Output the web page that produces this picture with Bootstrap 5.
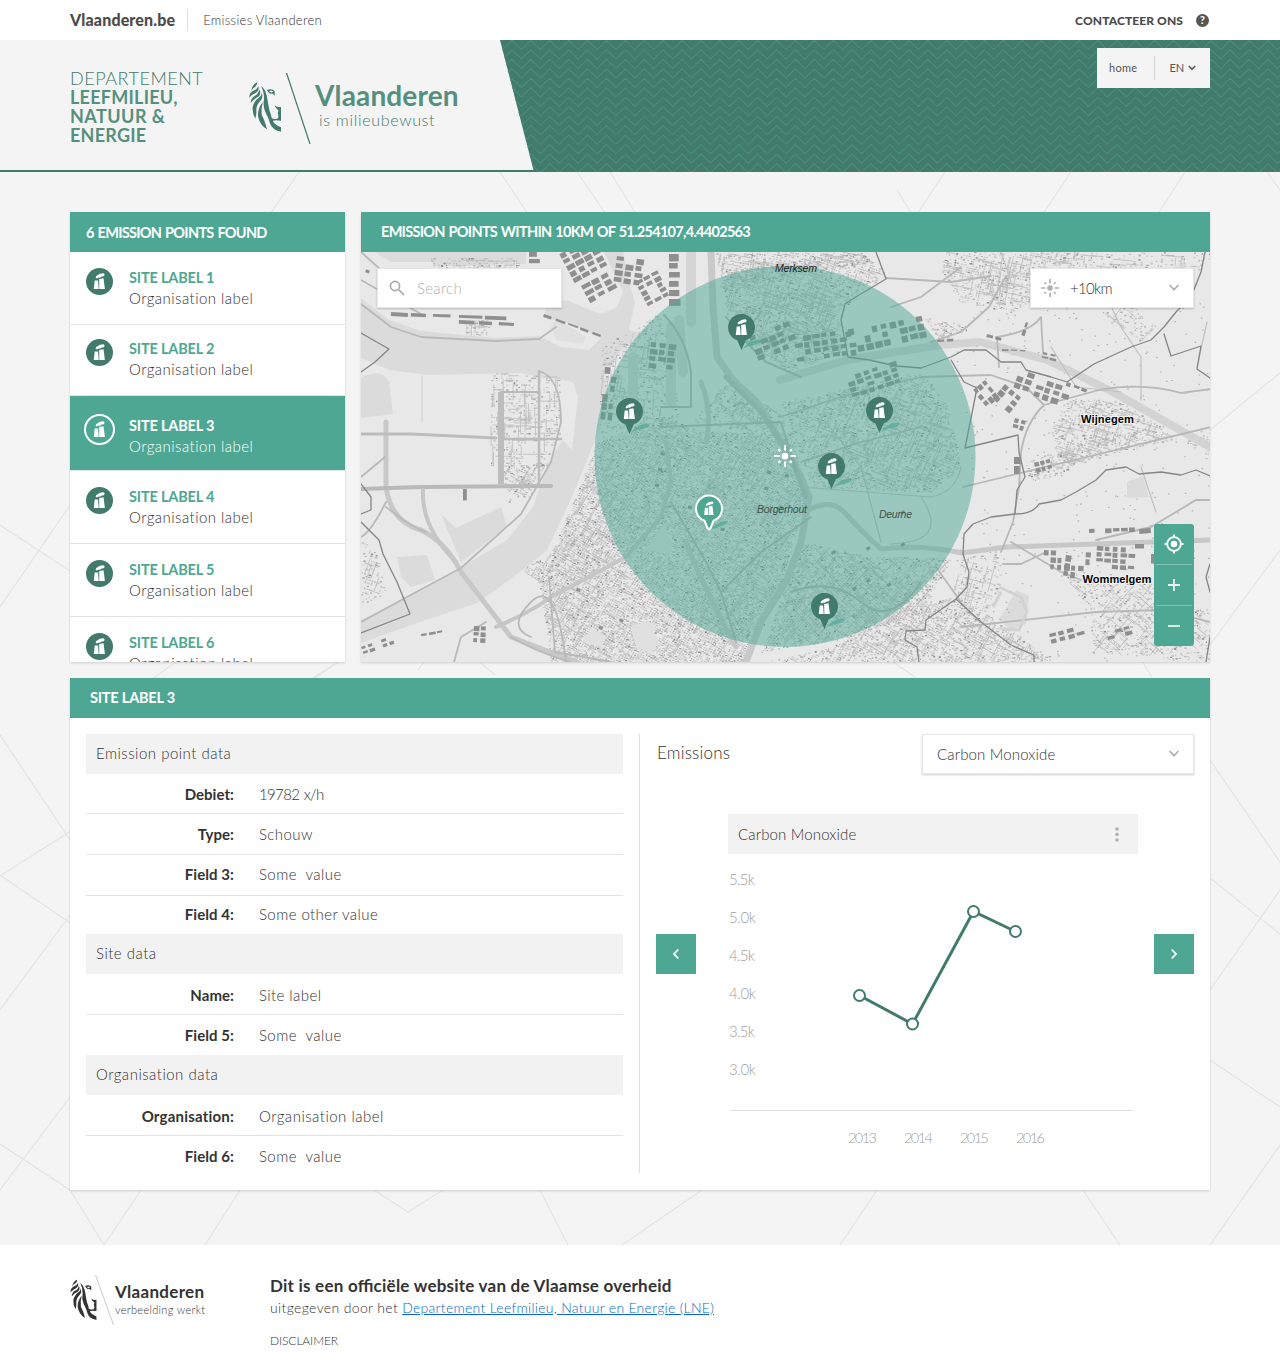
<!DOCTYPE html>
<html lang="nl">
<head>
<meta charset="utf-8">
<meta name="viewport" content="width=device-width, initial-scale=1">
<title>Emissies Vlaanderen</title>
<link href="https://cdn.jsdelivr.net/npm/bootstrap@5.3.0/dist/css/bootstrap.min.css" rel="stylesheet">
<style>
:root{--teal:#4ea793;--pine:#427a6b;--ink:#333;--line:#e3e3e3}
body{font-family:Lato,"Open Sans",sans-serif;font-weight:300;font-size:15px;line-height:21px;letter-spacing:.42px;color:var(--ink);background:#f4f4f4;height:1365px;overflow:hidden}
b,.fw-bold{font-weight:700!important}
svg{display:block;letter-spacing:0}
.topbar{height:40px;background:#fff}
.brand-name{font-size:16px;font-weight:900;letter-spacing:.13px;padding-right:12px;height:22px;line-height:22px;border-right:1px solid #dedede;color:#4b4b4b}
.app-name{font-size:13px;padding-left:15px;letter-spacing:.3px}
.contact{font-size:12px;font-weight:900;letter-spacing:.1px;color:#4b4b4b}
.hero{height:132px;border-bottom:2px solid var(--pine);position:relative}
.hero-bg{position:absolute;inset:0;height:132px;width:100%}
.hero .container{position:relative}
.dept{color:#55907f;font-size:18px;line-height:19px;letter-spacing:.25px;padding-top:29px;width:179px}
.dept div:first-child{letter-spacing:.53px;color:var(--pine)}
.dept .wide{letter-spacing:.45px}
.logo-name{font-size:28px;line-height:32px;color:#55907f;letter-spacing:.15px}
.logo-sub{font-size:16px;line-height:20px;color:var(--pine);letter-spacing:.7px;margin-top:-1px}
.langnav{background:#f4f4f4;width:113px;height:40px;margin-top:8px;font-size:11px;font-weight:400;letter-spacing:.3px;color:#555}
.langnav .rule{width:1px;height:24px;background:#d2d2d2}
.langnav span{margin-top:-1px}
.backdrop{position:absolute;left:0;top:172px;width:1280px;height:1073px}
.page{padding-top:40px;height:1073px;position:relative}
.panel{background:#fff;box-shadow:0 1px 2px rgba(0,0,0,.16)}
.panel-head{background:var(--teal);color:#fff;font-weight:700;height:40px;line-height:39px;font-size:14.5px;letter-spacing:-.71px;word-spacing:1px}
.sites{width:275px;height:450px;overflow:hidden}
.site{height:73px;padding:16px 16px 0;border-bottom:1px solid var(--line);gap:16px}
.site .nm{color:var(--teal);font-weight:700;font-size:14.5px;letter-spacing:-.17px}
.site .org{letter-spacing:.47px}
.site>div{margin-top:-1px}
.site.s2{height:71px;padding-top:14px}
.site.on{background:var(--teal);height:75px;color:#fff;padding:18px 14px 0;gap:14px;border-color:#dcebe7}
.site.on>div{margin-top:1px}
.site.on .nm{color:#fff}
.mapbox{width:849px;height:450px}
.mapview{height:410px;position:relative;overflow:hidden}
.field{background:#fff;border:1px solid #e6e6e6;box-shadow:0 1px 2px rgba(0,0,0,.2);height:40px}
.over{position:absolute;top:16px}
.zoomer{position:absolute;right:16px;bottom:16px;width:40px;background:var(--teal);border-radius:3px;padding:0 2px}
.zoomer span{height:40px;display:flex;align-items:center;justify-content:center}
.zoomer span+span{border-top:1px solid #83c1b4;height:41px}
.detail{margin-top:16px;height:512px}
.facts{width:554px;border-right:1px solid #dedede;height:439px;padding-right:16px}
.sect{background:#f2f2f2;height:40px;line-height:38px;padding-left:10px;letter-spacing:.5px}
.fact{height:41px;line-height:41px;border-bottom:1px solid var(--line)}
.fact.mid{line-height:39px}
.fact.low{line-height:43px}
.fact.top{height:40px}
.fact.end{height:38px;border:0;line-height:37px}
.fact.end2{height:40px;border:0}
.fact b{width:148px;text-align:right;margin-right:25px;letter-spacing:.05px}
.arrow{width:40px;height:40px;background:var(--teal);margin-top:120px}
.foot{background:#fff;height:120px}
.foot a{color:#0b68c8}
text{font-family:Lato,sans-serif}
.town{font-family:"Liberation Sans",Arial,sans-serif;font-size:10.5px;font-style:italic;fill:#3c524c}
.city{font-family:"Liberation Sans",Arial,sans-serif;font-size:11.2px;font-weight:bold;fill:#000;stroke:#f2f2f2;stroke-width:2px;paint-order:stroke}
</style>
<script src="https://cdn.jsdelivr.net/npm/bootstrap@5.3.0/dist/js/bootstrap.bundle.min.js"></script>
</head>
<body>
<!-- shared symbols -->
<svg width="0" height="0" class="position-absolute">
  <defs>
    <g id="lion">
      <path d="M34 68Q36 51 52 42Q51 52 46 56Q38 60 34 68z"/>
      <path d="M28 89Q27 76 38 69Q52 64 55 55Q59 66 48 74Q35 79 28 89z"/>
      <path d="M32 105Q32 91 44 84Q57 77 58 64Q65 77 55 86Q40 93 32 105z"/>
      <path d="M46 152Q37 138 38 118Q42 98 60 86Q65 82 65 74Q71 90 60 100Q48 112 49 128Q50 138 46 152z"/>
      <path d="M81 184Q58 170 54 143Q53 120 69 101Q62 124 66 143Q74 156 81 184z"/>
      <path d="M63 54Q76 64 80 82L88 126Q93 138 95 150Q98 154 112 152L123 148V158Q106 156 99 158Q100 168 123 178V191Q96 186 90 166Q86 150 76 132Q68 112 72 94Q73 72 63 54z"/>
      <path d="M103 112Q110 119 123 117V150L112 152Q117 148 115 142Q111 134 116 128Q108 122 103 112z"/>
      <path d="M81 66Q96 60 104 69L104 83Q99 75 90 77Q84 74 81 66z"/>
      <path d="M87 70Q94 65 100 71Q95 76 87 70z" fill="#f4f4f4"/>
    </g>
    <g id="plant" fill="#fff">
      <path d="M-4.8-.9H-1.4L-.8 7.6H-5.7z"/>
      <path d="M-.3-2.4L4-3.2L5.4 7.6H-.2z"/>
      <path d="M-3.9-3.5Q-4-5.8-1.4-6.5Q-.8-8 2-8Q5.2-9 5.1-6.6Q4.6-4.8 2.2-4.9Q.8-3.4-1-4Q-2.8-2.6-3.9-3.5z"/>
    </g>
    <g id="pin">
      <path d="M1 22Q4 17 11 13.5Q19 11 20.5 13Q19 16 12 17.5Q5 18.5 1 22z" fill="#56aa98" opacity=".75"/>
      <path d="M0 22.500L-4.300 12.800A13.500 13.500 0 1 1 4.300 12.800z" fill="#427a6b"/>
      <use href="#plant"/>
    </g>
    <g id="sun" stroke="currentColor" stroke-width="1.700" fill="none">
      <circle r="2.800" fill="currentColor" stroke="none"/>
      <path d="M0-9V-4.500M0 9V4.500M-9 0H-4.500M9 0H4.500M-5.600-5.600L-4-4M5.600 5.600L4 4M-5.600 5.600L-4 4M5.600-5.600L4-4"/>
    </g>
    <symbol id="dot" viewBox="-13.500 -13.500 27 27"><circle r="13.500" fill="#427a6b"/><use href="#plant"/></symbol>
  </defs>
</svg>

<div class="topbar">
  <div class="container px-0 d-flex align-items-center h-100">
    <span class="brand-name">Vlaanderen.be</span>
    <span class="app-name">Emissies Vlaanderen</span>
    <span class="contact ms-auto">CONTACTEER ONS</span>
    <svg style="margin:0 1px 0 13px" width="13" height="13" viewBox="0 0 13 13"><circle cx="6.500" cy="6.500" r="6.500" fill="#555"/><text x="6.500" y="10.200" font-size="10.500" font-weight="900" fill="#fff" text-anchor="middle">?</text></svg>
  </div>
</div>

<header class="hero">
  <svg class="hero-bg" viewBox="0 0 1280 132">
    <clipPath id="slant"><path d="M500 0H1280V132H534z"/></clipPath>
    <path d="M500 0H1280V132H534z" fill="#427a6b"/>
    <g clip-path="url(#slant)"><path id="zigzag" fill="none" stroke="#468f7c" stroke-width="1.100"/></g>
  </svg>
  <div class="container px-0 d-flex align-items-start">
    <div class="dept"><div>DEPARTEMENT</div><div class="fw-bold">LEEFMILIEU,<br><span class="wide">NATUUR &amp;</span><br>ENERGIE</div></div>
    <svg width="65" height="76" viewBox="0 0 65 76" style="margin-top:31px"><g transform="translate(-9 -3)"><use href="#lion" transform="scale(.3333)" fill="#427a6b"/></g><path d="M37.500 2L61 73" stroke="#427a6b" stroke-width="1.200"/></svg>
    <div style="margin:39px 0 0 1px"><div class="logo-name fw-bold">Vlaanderen</div><div class="logo-sub ps-1">is milieubewust</div></div>
    <nav class="langnav ms-auto d-flex align-items-center">
      <span style="margin-left:12px">home</span><span class="rule" style="margin-left:17px"></span><span style="margin-left:14px;letter-spacing:0">EN</span>
      <svg width="8" height="6" viewBox="0 0 8 6" style="margin-left:4px"><path d="M.8 1L4 4.300L7.200 1" fill="none" stroke="#555" stroke-width="1.500"/></svg>
    </nav>
  </div>
</header>

<svg class="backdrop" viewBox="0 172 1280 1073" fill="none" stroke="#e3e3e3" stroke-width="1.100">
  <path d="M299 172L0 607M577 172L606 214M500 172L528 214M610 172L636 214M945 172L917 214M897 190L912 214M1071 172L1043 214M1185 172L1158 214M1267 172L1280 190M0 525L70 571M0 876L338 662M120 702L176 662M280 702L338 662M418 670L424 662M480 662L495 675M890 660L915 677M1140 658L1152 677M1280 373L1210 430M1210 645L1280 550M1210 760L1280 862M1210 878L1280 934M1210 1060L1280 1107M1280 1145L1210 1245M70 840L0 735M70 923L0 875M0 1010L70 915M0 1144L70 1190L104 1245M70 1097L0 1190M104 1245L141 1190M374 1190L408 1212L443 1190M205 1245L240 1190M540 1190L568 1245M622 1245L702 1190M840 1245L877 1190M1083 1190L1120 1245M1210 990L1280 890"/>
</svg>

<main class="page">
  <div class="container px-0">
    <div class="d-flex gap-3">
      <section class="panel sites">
        <div class="panel-head ps-3" style="line-height:41px">6 EMISSION POINTS FOUND</div>
        <div class="site d-flex"><svg width="27" height="27"><use href="#dot"/></svg><div><div class="nm">SITE LABEL 1</div><div class="org">Organisation label</div></div></div>
        <div class="site s2 d-flex"><svg width="27" height="27"><use href="#dot"/></svg><div><div class="nm">SITE LABEL 2</div><div class="org">Organisation label</div></div></div>
        <div class="site on d-flex"><svg width="31" height="31" viewBox="-15.500 -15.500 31 31"><circle r="14.500" fill="none" stroke="#fff" stroke-width="2"/><use href="#plant"/></svg><div><div class="nm">SITE LABEL 3</div><div class="org">Organisation label</div></div></div>
        <div class="site d-flex"><svg width="27" height="27"><use href="#dot"/></svg><div><div class="nm">SITE LABEL 4</div><div class="org">Organisation label</div></div></div>
        <div class="site d-flex"><svg width="27" height="27"><use href="#dot"/></svg><div><div class="nm">SITE LABEL 5</div><div class="org">Organisation label</div></div></div>
        <div class="site d-flex"><svg width="27" height="27"><use href="#dot"/></svg><div><div class="nm">SITE LABEL 6</div><div class="org">Organisation label</div></div></div>
      </section>

      <section class="panel mapbox">
        <div class="panel-head" style="padding-left:20px">EMISSION POINTS WITHIN 10KM OF 51.254107,4.4402563</div>
        <div class="mapview">
          <svg width="849" height="410" viewBox="0 0 849 410">
            <rect width="849" height="410" fill="#e8e8e8"/>
            <!-- water -->
            <g fill="#dbdbdb">
              <path d="M0 46L28 68L60 79L135 86L178 84L200 95L228 98L240 86L205 70L183 66L185 56L205 48L240 62L256 55L262 40L243 0H262L268 30L274 50L268 78L284 82L262 96L243 125L247 141L240 175L234 188L211 245L186 298L166 315L116 351L56 371L0 391V368L46 345L99 316L146 288L172 255L187 211L202 188L211 198L217 145L212 130L159 121L66 123L29 118L0 106z"/>
              <path d="M14 0H165V12H140L120 14H75L70 10H30z"/>
              <path d="M0 126Q20 115 28 130L32 162L0 166zM80 262L95 276L140 255L146 275L100 310zM36 305L66 303L74 328L50 335L40 325zM345 231L358 228L360 246L344 246z"/>
              <path d="M190 75L196 66L225 85L222 92L195 88z" fill="#e0e0e0"/>
              <path d="M766 230L782 224L788 245L766 246zM655 338L668 344L665 372L650 378L638 368L645 356z"/>
            </g>
            <g id="texture"></g>
            <!-- canal and docks -->
            <g fill="none" stroke-linejoin="round" stroke-linecap="round">
              <path d="M350 0L352 55L356 105L372 128L396 150L420 190L440 225L448 245L440 290L425 330L400 370L385 410" stroke="#c9c9c9" stroke-width="7"/>
              <path d="M272 105V150M310 75V150M318 68L322 120M330 0V70" stroke="#d5d5d5" stroke-width="10"/>
              <path d="M419 128L486 108L579 93L619 90L686 108L752 140L819 178L849 195" stroke="#d3d3d3" stroke-width="8"/>
              <path d="M365 125L400 160L430 205L445 245" stroke="#bdbdbd" stroke-width="5"/>
              <!-- motorways -->
              <path d="M448 258Q470 245 485 262T520 297Q560 292 601 301L645 295L850 288M25 170V235Q30 270 60 278Q85 290 100 320L150 385L215 410M345 190Q352 160 340 130M325 290Q340 330 375 395" stroke="#c8c8c8" stroke-width="5"/>
              <path d="M0 237L60 235L190 234" stroke="#b9b9b9" stroke-width="4"/>
              <path d="M62 238Q60 275 95 310M135 375Q170 360 190 345L265 305L300 265L310 230L305 190" stroke="#c6c6c6" stroke-width="4"/>
              <path d="M25 250Q10 280 0 285M25 255Q50 275 65 280M140 140H178M178 119Q200 125 200 170L190 210L160 262L100 316L46 345L0 370M0 52L30 75L60 85L135 89L178 87L195 75M170 385Q145 375 170 350T205 410M188 325L194 400L250 410M150 385Q175 400 215 412M93 410L100 385L125 370M0 0L20 18M0 28L60 62M0 225L24 205" stroke="#b9b9b9" stroke-width="1.800"/>
              <path d="M140 140V232" stroke="#bdbdbd" stroke-width="6" stroke-linecap="butt"/><path d="M178 119V234M140 187H200" stroke="#bcbcbc" stroke-width="2.500"/><path d="M61 125V170" stroke="#cfcfcf"/>
              <path d="M0 182H50L135 186" stroke="#bcbcbc" stroke-width="3"/>
              <path d="M419 165L480 145L560 125L630 123L665 135L683 153L738 138Q780 130 820 141L850 137M683 153Q665 170 660 200L658 235M602 235L850 175M638 115L636 85Q670 80 680 65L682 100M440 210L500 190L560 175M525 26L590 30L630 24M645 24L628 55L600 80L570 90M600 15L560 45L530 55M658 235L652 270L640 300M735 288L790 275L835 248H849M650 290L700 320L720 328M642 312H660L685 300M600 375L735 360L800 358L849 370M575 315L600 350" stroke="#b8b8b8" stroke-width="1.800"/>
              <path d="M303 63Q325 85 330 120V155H300M365 65L385 90H420M400 60L380 85M385 90L405 110L440 125M300 175L420 170L435 220M310 250L345 310L360 340L375 390M360 340L400 300L450 265M430 340Q470 325 500 350T560 330" stroke="#b5b5b5" stroke-width="2"/>
              <path d="M465 170L500 215L520 290M440 235L570 245Q595 240 600 215M560 245Q590 290 530 292M690 95L715 135L760 140M640 0L650 30M780 148V105L760 75L748 50M846 70L836 115M780 215L795 260" stroke="#c0c0c0" stroke-width="1.200"/>
              <!-- municipal limits -->
              <path d="M0 81L28 97L14 110L0 120M0 232L10 245V258L0 262M0 270L18 288L22 302L36 330L49 362L0 381M515 0L525 27L498 43L484 52L480 68L487 105L508 108L535 114L560 116L590 105L603 98L625 98L640 110L660 110L665 118L690 125L706 130L733 112L770 95L790 88L803 75L815 60L830 45L840 20L844 0M803 82L810 104L840 94L836 117L849 126M590 108L603 130L616 136L604 196L657 183L658 200L664 225L656 238L654 262M602 302L603 282L612 272L630 265L654 262Q672 262 678 252L700 248L715 240L735 228L745 218L765 215L778 222L800 220L820 223L835 218L849 224M602 302L608 320L606 335L595 347L565 368L564 378L545 379L544 388L556 395L558 410M595 347L620 370L650 393L673 403V410M849 312L845 325L849 340M849 385L845 410" stroke="#858585" stroke-width="1.300"/>
            </g>
            <g id="blocks" fill="#8f8f8f"></g>
            <path d="M638 335L660 345L666 360L658 378L640 377M640 340L632 355" fill="none" stroke="#d2d2d2" stroke-width="3"/>
            <path d="M304 271L284 298L312 303zM288 369L298 390L290 402L275 394L270 376zM230 375L245 385L240 395L220 390z" fill="#e0e0e0"/>
            <circle cx="424" cy="204.500" r="190.500" fill="#4ea793" fill-opacity=".5"/>
            <g>
              <text class="town" x="414" y="20" style="fill:#222" textLength="42">Merksem</text>
              <text class="town" x="396" y="261" textLength="50">Borgerhout</text>
              <text class="town" x="518" y="266" textLength="33">Deurne</text>
              <text class="city" x="720" y="171" textLength="53">Wijnegem</text>
              <text class="city" x="721.500" y="331" textLength="69">Wommelgem</text>
            </g>
            <use href="#pin" x="380.500" y="75.500"/><use href="#pin" x="268.500" y="159.500"/><use href="#pin" x="518.500" y="158.500"/><use href="#pin" x="470.500" y="214.500"/><use href="#pin" x="463.500" y="354.500"/>
            <g transform="translate(348 256.500)"><path d="M1 21Q8 13 19 12Q19 17 1 21z" fill="#56aa98" opacity=".8"/><path d="M0 21Q-2 20-2.500 17L-4.500 12.200A13 13 0 1 1 4.500 12.200L2.500 17Q2 20 0 21z" fill="#4ea793" stroke="#fff" stroke-width="2"/><use href="#plant" transform="scale(.85)"/></g>
            <g transform="translate(424 204) scale(1.200)" color="#fff"><use href="#sun"/></g>
          </svg>
          <div class="field over d-flex align-items-center" style="left:16px;width:185px;padding-left:11px">
            <svg width="16" height="16" viewBox="0 0 16 16" fill="none" stroke="#aaa" stroke-width="1.700"><circle cx="6" cy="6" r="4.600"/><path d="M9.500 9.500L15 15"/></svg>
            <span style="margin-left:12px;color:#b0b0b0;letter-spacing:.3px">Search</span>
          </div>
          <div class="field over d-flex align-items-center" style="right:16px;width:164px;padding:0 13px 0 10px">
            <svg width="18" height="18" viewBox="-9 -9 18 18" color="#b0b0b0"><use href="#sun"/></svg>
            <span style="margin-left:11px;letter-spacing:-.7px">+10km</span>
            <svg class="ms-auto" width="12" height="8" viewBox="0 0 12 8"><path d="M1.500 1L6 5.700L10.500 1" fill="none" stroke="#b0b0b0" stroke-width="1.700"/></svg>
          </div>
          <div class="zoomer">
            <span><svg width="20" height="20" viewBox="-10 -10 20 20" stroke="#fff" stroke-width="1.800" fill="none"><circle r="6.800"/><circle r="3.200" fill="#fff" stroke="none"/><path d="M0-9.500V-7M0 9.500V7M-9.500 0H-7M9.500 0H7"/></svg></span>
            <span><svg width="12" height="12" stroke="#e8f4f1" stroke-width="1.800"><path d="M6 0V12M0 6H12"/></svg></span>
            <span><svg width="12" height="12" stroke="#e8f4f1" stroke-width="1.800"><path d="M0 6H12"/></svg></span>
          </div>
        </div>
      </section>
    </div>

    <section class="panel detail">
      <div class="panel-head" style="padding-left:20px;letter-spacing:-.2px;word-spacing:0">SITE LABEL 3</div>
      <div class="d-flex px-3 pt-3">
        <div class="facts">
          <div class="sect">Emission point data</div>
          <div class="fact top d-flex"><b>Debiet:</b><span style="letter-spacing:-.65px;word-spacing:1px">19782 x/h</span></div>
          <div class="fact d-flex"><b>Type:</b><span>Schouw</span></div>
          <div class="fact mid d-flex"><b>Field 3:</b><span>Some&nbsp; value</span></div>
          <div class="fact end d-flex"><b>Field 4:</b><span>Some other value</span></div>
          <div class="sect">Site data</div>
          <div class="fact low d-flex"><b>Name:</b><span>Site label</span></div>
          <div class="fact end2 d-flex"><b>Field 5:</b><span>Some&nbsp; value</span></div>
          <div class="sect">Organisation data</div>
          <div class="fact low d-flex"><b style="letter-spacing:.2px">Organisation:</b><span style="letter-spacing:.5px">Organisation label</span></div>
          <div class="fact end2 d-flex"><b>Field 6:</b><span>Some&nbsp; value</span></div>
        </div>
        <div class="flex-grow-1 ps-3">
          <div class="d-flex align-items-center">
            <span style="font-size:17px;padding:0 0 3px 1px;letter-spacing:.2px">Emissions</span>
            <div class="field ms-auto d-flex align-items-center" style="width:272px;padding:0 13px 0 14px"><span style="letter-spacing:.15px">Carbon Monoxide</span>
              <svg class="ms-auto" width="12" height="8" viewBox="0 0 12 8"><path d="M1.500 1L6 5.700L10.500 1" fill="none" stroke="#b0b0b0" stroke-width="1.700"/></svg></div>
          </div>
          <div class="d-flex justify-content-between" style="margin-top:40px">
            <div class="arrow d-flex align-items-center justify-content-center"><svg width="8" height="12" viewBox="0 0 8 12"><path d="M6.300 1.500L2 6L6.300 10.500" fill="none" stroke="#fff" stroke-width="1.800"/></svg></div>
            <div style="width:410px;margin-right:-16px">
              <div class="sect d-flex justify-content-between align-items-center"><span style="letter-spacing:.15px">Carbon Monoxide</span><svg width="42" height="16" fill="#b0b0b0"><circle cx="21" cy="3" r="1.800"/><circle cx="21" cy="8.500" r="1.800"/><circle cx="21" cy="14" r="1.800"/></svg></div>
              <svg width="410" height="310" viewBox="728 854 410 310" font-size="15" font-weight="300" fill="#a0a0a0">
                <text x="729" y="885" textLength="26">5.5k</text><text x="729" y="923" textLength="27">5.0k</text><text x="729" y="961" textLength="26">4.5k</text><text x="729" y="999" textLength="27">4.0k</text><text x="729" y="1037" textLength="26">3.5k</text><text x="729" y="1075" textLength="27">3.0k</text>
                <path d="M730 1110.500H1133" stroke="#e0e0e0"/>
                <g font-size="14.500"><text x="848" y="1143" textLength="29">2013</text><text x="904" y="1143" textLength="29">2014</text><text x="960" y="1143" textLength="29">2015</text><text x="1016" y="1143" textLength="29">2016</text></g>
                <path d="M859.500 995.500L912.500 1024L973.500 911.500L1015.500 931.500" fill="none" stroke="#427a6b" stroke-width="3"/>
                <g fill="#fff" stroke="#427a6b" stroke-width="2"><circle cx="859.500" cy="995.500" r="5.500"/><circle cx="912.500" cy="1024" r="5.500"/><circle cx="973.500" cy="911.500" r="5.500"/><circle cx="1015.500" cy="931.500" r="5.500"/></g>
              </svg>
            </div>
            <div class="arrow d-flex align-items-center justify-content-center"><svg width="8" height="12" viewBox="0 0 8 12"><path d="M1.700 1.500L6 6L1.700 10.500" fill="none" stroke="#fff" stroke-width="1.800"/></svg></div>
          </div>
        </div>
      </div>
    </section>
  </div>
</main>

<footer class="foot position-relative">
  <div class="container px-0 d-flex">
    <div class="d-flex" style="width:200px;padding-top:30px">
      <svg width="44" height="51" viewBox="0 0 44 51"><g transform="translate(-7 -7)"><use href="#lion" transform="scale(.272)" fill="#333"/></g><path d="M25.500 0L43.500 50" stroke="#c5cbd3"/></svg>
      <div style="padding:7px 0 0 1px"><div class="fw-bold" style="font-size:17px;line-height:20px;color:#333;letter-spacing:.3px">Vlaanderen</div><div style="font-size:11px;line-height:16px;letter-spacing:.32px">verbeelding werkt</div></div>
    </div>
    <div style="padding-top:30px">
      <div class="fw-bold" style="font-size:17px;line-height:22px;color:#333;letter-spacing:.23px;font-feature-settings:'liga' 1">Dit is een officiële website van de Vlaamse overheid</div>
      <div style="font-size:14px;line-height:22px;letter-spacing:.28px"><span style="letter-spacing:.35px">uitgegeven door het</span> <a href="#">Departement Leefmilieu, Natuur en Energie (LNE)</a></div>
      <div style="font-size:12px;line-height:20px;margin-top:12px;letter-spacing:-.1px">DISCLAIMER</div>
    </div>
  </div>
</footer>

<script>
// Header chevrons
let zig = '';
for (let r = -1; r < 14; r++) {
  const top = .4 + r * 9.47;
  zig += `M474.200 ${top.toFixed(2)}`;
  for (let x = 474.2; x < 1290; x += 18.9) zig += `L${(x + 9.45).toFixed(2)} ${(top + 9.2).toFixed(2)}L${(x + 18.9).toFixed(2)} ${top.toFixed(2)}`;
}
document.getElementById('zigzag').setAttribute('d', zig);

// Seeded generator, so the built-up texture is the same on every load.
let seed = 7;
const rnd = () => (seed = (seed * 16807) % 2147483647) / 2147483647;
const inside = (x, y, p) => {
  let c = false;
  for (let i = 0, j = p.length - 2; i < p.length; j = i, i += 2)
    if ((p[i+1] > y) !== (p[j+1] > y) && x < (p[j]-p[i]) * (y-p[i+1]) / (p[j+1]-p[i+1]) + p[i]) c = !c;
  return c;
};
// Quarters: outline, share of built cells, street angle in degrees
const quarters = [
  [[236,190,300,165,345,180,430,180,445,245,420,330,385,410,190,410,178,330,160,318,190,300,214,245], .96, 32],
  [[360,20,420,8,500,0,525,20,480,60,480,100,425,120,385,90,365,60], .72, 20],
  [[355,0,500,0,515,12,440,20,360,40], .65, 10],
  [[420,150,560,120,585,150,600,215,570,240,450,235], .7, 22],
  [[440,290,520,305,590,305,560,360,490,385,400,400], .82, 42],
  [[470,395,560,350,600,345,690,405,690,410,400,410], .68, 30],
  [[600,305,640,300,640,340,620,370,590,345], .35, 15],
  [[583,0,720,0,720,20,650,60,600,50,580,20], .55, 12],
  [[690,0,849,0,849,16,690,18], .35, 5],
  [[705,145,760,150,800,175,849,205,849,180,800,190,700,215,688,180], .55, 18],
  [[700,320,790,330,849,360,849,410,730,400,730,360], .42, 40],
  [[664,208,760,180,735,205,690,225,668,230], .45, 15],
  [[562,65,610,75,580,90], .45, 30],
  [[740,60,765,50,800,75,780,90], .3, 40],
  [[0,285,14,300,25,340,0,355], .5, 20],
  [[128,118,200,125,200,175,185,215,130,215], .34, 0],
  [[140,215,185,210,170,245,145,250], .5, 30],
  [[70,6,160,6,160,16,70,16], .5, 0],
  [[104,68,130,68,130,84,104,84], .6, 0],
  [[240,95,300,60,320,170,238,185], .4, 8],
  [[365,130,425,165,420,185,330,170], .5, 35]
];
const tones = ['#c6c6c6', '#b2b2b2', '#909090'], paths = ['', '', ''];
let streets = '';
for (const [poly, share, deg] of quarters) {
  const a = deg * Math.PI / 180, ca = Math.cos(a), sa = Math.sin(a);
  for (let u = -500; u < 1100; u += 2.5) for (let v = -700; v < 600; v += 2.3) {
    const x = u * ca - v * sa, y = u * sa + v * ca;
    if (x < 0 || x > 849 || y < 0 || y > 410 || !inside(x, y, poly)) continue;
    if (rnd() > share * .85) continue;
    const t = rnd(), w = (1 + rnd() * 1.8).toFixed(1), h = (.8 + rnd() * 1.1).toFixed(1);
    paths[t < .58 ? 0 : t < .91 ? 1 : 2] += `M${x.toFixed(1)} ${y.toFixed(1)}h${w}v${h}h-${w}z`;
  }
  for (let k = 0; k < 900 * share; k++) {
    const i = Math.floor(rnd() * poly.length / 2) * 2, x = poly[i] + (rnd() - .5) * 160, y = poly[i+1] + (rnd() - .5) * 160;
    const turn = rnd() < .5, l = 8 + rnd() * 16, dx = (turn ? ca : -sa) * l, dy = (turn ? sa : ca) * l;
    if (inside(x, y, poly) && inside(x + dx, y + dy, poly)) streets += `M${x.toFixed(1)} ${y.toFixed(1)}l${dx.toFixed(1)} ${dy.toFixed(1)}`;
  }
}
// Loose farm buildings outside the quarters
for (let k = 0; k < 400; k++) {
  const x = 590 + rnd() * 259, y = rnd() * 410;
  paths[1] += `M${x.toFixed(1)} ${y.toFixed(1)}h1.500v1.200h-1.500z`;
}
document.getElementById('texture').innerHTML =
  paths.map((d, i) => `<path d="${d}" fill="${tones[i]}"/>`).join('') + `<path d="${streets}" stroke="#bcbcbc" stroke-width=".8" fill="none"/>`;

// Industrial estates: origin, columns, rows, cell size, angle, share
const estates = [
  [195,-4,4,6,10,7,-28,.95],[220,34,3,3,11,7,-28,.95],[256,4,3,4,10,7,8,.85],[274,30,3,5,9,6,-28,.85],[308,2,1,6,13,9,0,.75],
  [290,90,3,4,9,7,6,.85],[30,60,2,1,20,6,3,1],[72,62,3,1,26,5,2,1],[98,68,3,1,20,5,3,1],[183,62,5,1,13,4,20,1],
  [168,0,1,2,13,7,0,1],[244,115,2,6,7,9,5,.6],[388,85,5,4,9,7,-22,.8],[433,85,7,4,9,7,-8,.7],[484,80,9,3,9,8,-12,.72],[485,125,6,4,9,6,-18,.8],
  [576,88,2,1,10,4,-5,1],[626,82,2,1,9,5,15,1],[641,97,3,1,9,3,3,1],[624,128,3,3,8,6,50,.9],[644,132,3,3,8,7,40,.8],[659,117,2,3,9,7,20,.8],[678,126,4,3,9,7,18,.7],
  [706,130,3,1,8,5,20,1],[654,166,2,2,7,6,15,.8],[673,211,3,2,6,6,-15,1],[653,205,1,2,8,9,0,1],[682,100,2,2,8,4,12,.7],[728,277,6,1,8,6,-2,.9],[778,277,1,1,13,8,-5,1],
  [736,294,5,4,8,6,3,.8],[774,292,1,1,13,6,0,1],[790,302,1,1,9,15,0,1],[683,298,7,3,7,7,3,.7],[705,303,2,3,7,8,8,.8],[113,374,2,3,7,6,3,.8],
  [102,237,1,1,7,17,0,1],[60,382,4,1,8,4,-10,.8],[0,395,6,2,7,5,-20,.5],[688,382,4,2,9,6,-15,.5],[745,380,3,2,9,5,-15,.6],[665,70,1,2,5,8,20,1],
  [300,200,8,5,18,16,10,.2],[470,300,7,5,16,14,-30,.25],[200,330,7,5,17,14,20,.13],[0,8,4,3,8,7,20,.2]
];
let b = '';
for (const [ox, oy, n, m, w, h, deg, share] of estates) {
  const sparse = share < .3;
  b += `<g transform="translate(${ox} ${oy}) rotate(${deg})">`;
  for (let i = 0; i < n; i++) for (let j = 0; j < m; j++) {
    if (rnd() > share) continue;
    const bw = sparse ? 4 : w - 1.2 - rnd() * w * .3, bh = sparse ? 3 : h - 1 - rnd() * h * .3;
    b += `<rect x="${i*w}" y="${j*h}" width="${bw.toFixed(1)}" height="${bh.toFixed(1)}"/>`;
  }
  b += '</g>';
}
document.getElementById('blocks').innerHTML = b;
</script>
</body>
</html>
